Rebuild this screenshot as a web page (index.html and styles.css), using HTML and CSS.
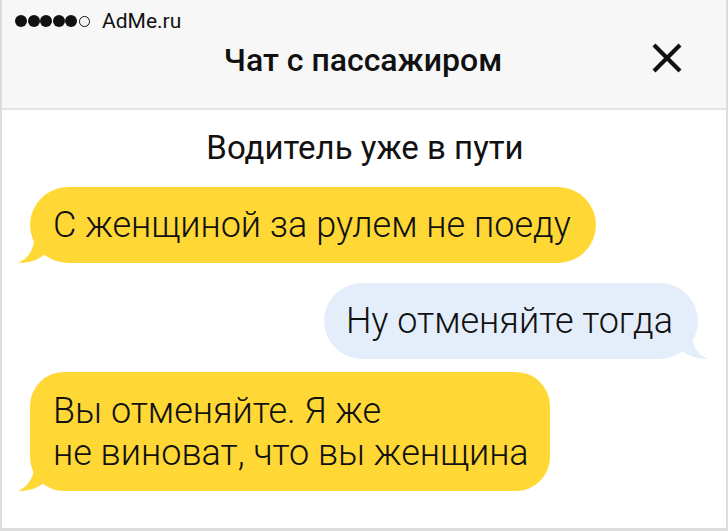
FILE: index.html
```html
<!doctype html>
<html>
<head>
<meta charset="utf-8">
<title>Чат с пассажиром</title>
<link rel="stylesheet" href="styles.css">
</head>
<body>
<div class="phone">
	<div class="top">
		<div class="status">
			<span class="dot"></span><span class="dot"></span><span class="dot"></span><span class="dot"></span><span class="dot"></span><span class="dot empty"></span>
			<span class="carrier">AdMe.ru</span>
		</div>
		<div class="titlebar">
			<h1>Чат с пассажиром</h1>
			<svg class="close" width="32" height="32" viewBox="0 0 32 32"><path d="M3 3L29 29M29 3L3 29" stroke="#111" stroke-width="4.2" fill="none"/></svg>
		</div>
	</div>
	<div class="chat">
		<p class="info">Водитель уже в пути</p>
		<div class="msg left">
			<div class="bubble yellow">С женщиной за рулем не поеду</div>
			<svg class="tail" width="30" height="26" viewBox="0 0 30 26"><path d="M16 0C16 10 10 20 0 24C10 24 18 22 26 16L30 0Z" fill="#ffd836"/></svg>
		</div>
		<div class="msg right">
			<div class="bubble blue">Ну отменяйте тогда</div>
			<svg class="tail" width="30" height="26" viewBox="0 0 30 26"><path d="M14 0C14 10 20 20 30 24C20 24 12 22 4 16L0 0Z" fill="#e4eefb"/></svg>
		</div>
		<div class="msg left">
			<div class="bubble yellow tall">Вы отменяйте. Я же<br>не виноват, что вы женщина</div>
			<svg class="tail" width="30" height="26" viewBox="0 0 30 26"><path d="M16 0C16 10 10 20 0 24C10 24 18 22 26 16L30 0Z" fill="#ffd836"/></svg>
		</div>
	</div>
</div>
</body>
</html>
```
FILE: styles.css
```css
*{margin:0;padding:0}
body{background:#fff;font-family:Roboto,"Liberation Sans",sans-serif;color:#111}
.phone{width:724px;height:528px;border-left:2px solid #dcdcdc;border-right:2px solid #dcdcdc;border-bottom:3px solid #dcdcdc;overflow:hidden;background:#fff}
.top{background:#f7f7f7;height:108px;border-bottom:2px solid #e4e4e4}
.status{display:flex;align-items:center;padding:11px 0 0 13px;height:20px}
.dot{width:12px;height:12px;border-radius:50%;background:#111;display:inline-block;margin-right:0.5px}
.dot.empty{background:none;border:1.6px solid #111;width:9px;height:9px;margin-left:1px}
.carrier{font-size:21px;margin-left:12px;line-height:20px}
.titlebar{position:relative;height:58px;display:flex;align-items:center;justify-content:center}
.titlebar h1{font-size:32px;font-weight:500;margin-left:-2px}
.close{position:absolute;right:43px;top:11px}
.chat{padding:18px 0 0 0}
.info{text-align:center;font-size:33px;line-height:40px;margin-bottom:19px;margin-left:2px}
.msg{position:relative;display:flex;margin-bottom:20px}
.msg.left{padding-left:28px}
.msg.right{justify-content:flex-end;padding-right:28px;margin-bottom:13px}
.bubble{font-size:36px;font-weight:300;line-height:42px;padding:17px 25px 17px 23px;border-radius:38px;position:relative;z-index:1}
.bubble.yellow{background:#ffd836}
.bubble.blue{background:#e4eefb}
.bubble.blue{padding-left:22px}
.bubble.tall{border-radius:34px;padding:17.5px 21px 17.5px 23px}
.msg .tail{position:absolute;bottom:-2px}
.msg.left .tail{left:16px}
.msg.right .tail{right:18px}
```
